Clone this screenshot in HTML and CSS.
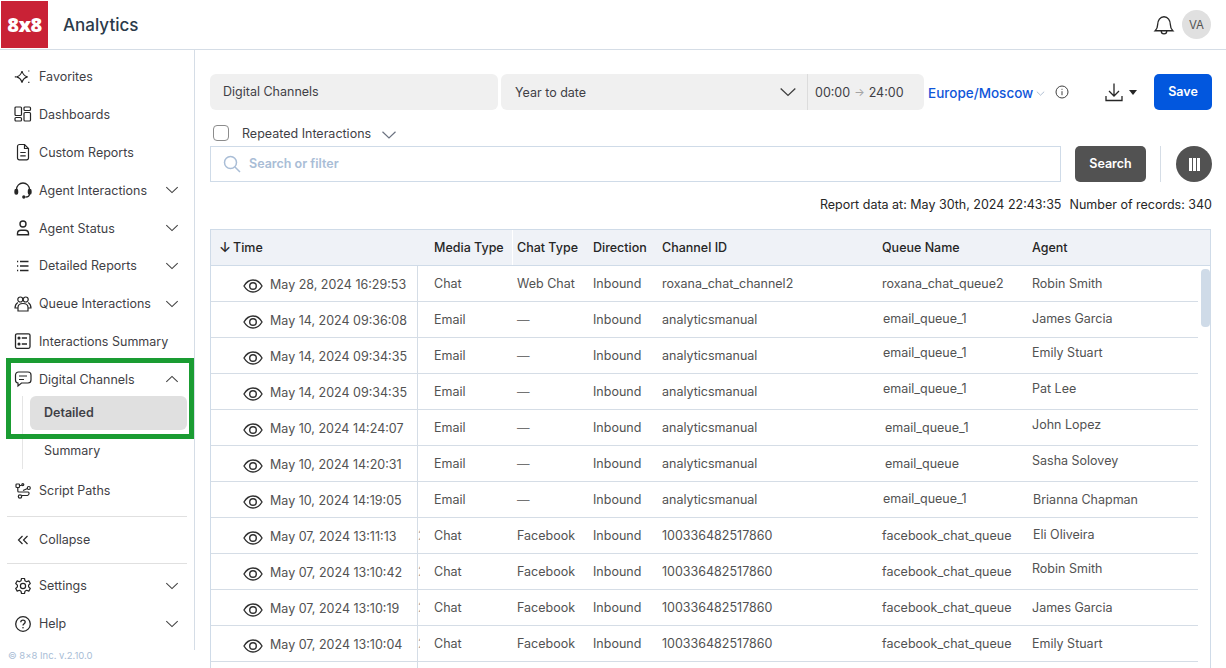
FILE: index.html
```html
<!DOCTYPE html>
<html lang="en">
<head>
    <meta charset="UTF-8">
    <meta name="viewport" content="width=device-width, initial-scale=1.0">
    <title>Analytics</title>
    <link rel="stylesheet" href="styles.css">
</head>
<body>
    <svg class="sprite" aria-hidden="true">
        <symbol id="i-down" viewBox="0 0 16 16"><path d="M1.500 4.800 8 11l6.500-6.200" fill="none" stroke="currentColor" stroke-width="1.200"/></symbol>
        <symbol id="i-eye" viewBox="0 0 20 16"><path d="M1 8c2.200-3.800 5.200-6 9-6s6.800 2.200 9 6c-2.200 3.800-5.200 6-9 6s-6.800-2.200-9-6Z" fill="none" stroke="currentColor" stroke-width="1.400"/><circle cx="10" cy="8" r="3.300" fill="none" stroke="currentColor" stroke-width="1.400"/></symbol>
    </svg>

    <header class="topbar">
        <div class="logo">8x8</div>
        <div class="app-name">Analytics</div>
        <svg class="bell" width="22" height="22" viewBox="0 0 20 20" fill="none" stroke="#262626" stroke-width="1.200"><path d="M2 15.200c1.500-1.400 2.200-2.600 2.200-5.400C4.200 5.800 6.500 2.500 10 2.500s5.800 3.300 5.800 7.300c0 2.800.7 4 2.200 5.400Z"/><path d="M7.500 15.500c0 1.700 1.100 2.600 2.500 2.600s2.500-.9 2.500-2.600"/></svg>
        <div class="avatar">VA</div>
    </header>

    <div class="layout">
        <aside class="sidebar">
            <nav class="nav-list">
                <a class="nav-item">
                    <svg class="nav-icon" viewBox="0 0 18 18" fill="none" stroke="currentColor" stroke-width="1.200"><path d="M8 4c.7 3.300 2.200 5 5.600 5.800C10.200 10.600 8.700 12.300 8 15.600c-.7-3.300-2.200-5-5.600-5.800C5.800 9 7.300 7.300 8 4Z"/><path d="M.8 9.800h1.200M14.800 3.400v1.200M14.800 14.800V16"/></svg>
                    <span>Favorites</span>
                </a>
                <a class="nav-item">
                    <svg class="nav-icon" viewBox="0 0 18 18" fill="none" stroke="currentColor" stroke-width="1.200"><rect x="1" y="2" width="6.500" height="8.500" rx="1"/><rect x="1" y="12.500" width="6.500" height="3.500" rx="1"/><rect x="10" y="2" width="6.500" height="3.500" rx="1"/><rect x="10" y="7.500" width="6.500" height="8.500" rx="1"/></svg>
                    <span>Dashboards</span>
                </a>
                <a class="nav-item">
                    <svg class="nav-icon" viewBox="0 0 18 18" fill="none" stroke="currentColor" stroke-width="1.200"><path d="M5.500 1.500h5l4 4v9.500a1.800 1.800 0 0 1-1.800 1.800H5.300A1.800 1.800 0 0 1 3.500 15V3.500a2 2 0 0 1 2-2Z"/><path d="M10.500 1.500v4h4M6.300 9.500h5.400M6.300 12.800h5.400"/></svg>
                    <span>Custom Reports</span>
                </a>
                <a class="nav-item">
                    <svg class="nav-icon" viewBox="0 0 18 18" fill="none" stroke="currentColor" stroke-width="1.300"><path d="M2.500 10V8.500a6.500 6.500 0 0 1 13 0V10"/><rect x="1" y="8.500" width="2.600" height="4.500" rx="1.200" fill="currentColor"/><rect x="14.400" y="8.500" width="2.600" height="4.500" rx="1.200" fill="currentColor"/><path d="M15.500 13c0 2-1.500 3-4 3"/><circle cx="9.800" cy="16" r="1" fill="currentColor"/></svg>
                    <span>Agent Interactions</span>
                    <svg class="chevron"><use href="#i-down"/></svg>
                </a>
                <a class="nav-item">
                    <svg class="nav-icon" viewBox="0 0 18 18" fill="none" stroke="currentColor" stroke-width="1.400"><circle cx="9" cy="5" r="3"/><path d="M3.500 15.800v-1.300c0-2 1.500-3.300 3.500-3.300h4c2 0 3.500 1.300 3.500 3.300v1.300Z"/></svg>
                    <span>Agent Status</span>
                    <svg class="chevron"><use href="#i-down"/></svg>
                </a>
                <a class="nav-item">
                    <svg class="nav-icon" viewBox="0 0 18 18" fill="none" stroke="currentColor" stroke-width="1.300"><path d="M6 4.500h8.500M6 9h8.500M6 13.500h8.500"/><path d="M3 4.500h1.200M3 9h1.200M3 13.500h1.200"/></svg>
                    <span>Detailed Reports</span>
                    <svg class="chevron"><use href="#i-down"/></svg>
                </a>
                <a class="nav-item">
                    <svg class="nav-icon" viewBox="0 0 18 18" fill="none" stroke="currentColor" stroke-width="1.200"><circle cx="6.300" cy="4.500" r="2.500"/><circle cx="11.700" cy="4.500" r="2.500"/><path d="M4 16v-3.500C4 10 6 8.500 9 8.500s5 1.500 5 4V16Z"/><path d="M3.800 7.500C2.300 8.500 1 10.200 1 13h3M14.200 7.500c1.500 1 2.800 2.700 2.800 5.500h-3"/></svg>
                    <span>Queue Interactions</span>
                    <svg class="chevron"><use href="#i-down"/></svg>
                </a>
                <a class="nav-item">
                    <svg class="nav-icon" viewBox="0 0 18 18" fill="none" stroke="currentColor" stroke-width="1.300"><rect x="1.500" y="1.800" width="14.500" height="14.500" rx="1.500"/><circle cx="5" cy="6" r=".9" fill="currentColor"/><circle cx="5" cy="12" r=".9" fill="currentColor"/><path d="M7.800 6H13M7.800 12H13"/></svg>
                    <span>Interactions Summary</span>
                </a>
                <a class="nav-item">
                    <svg class="nav-icon" viewBox="0 0 18 18" fill="none" stroke="currentColor" stroke-width="1.200"><path d="M4.500 2h9.500A3 3 0 0 1 17 5v5a3 3 0 0 1-3 3H7.500L4 16v-3A3 3 0 0 1 1.500 10V5a3 3 0 0 1 3-3Z"/><path d="M5 6h8M5 9.500h5"/></svg>
                    <span>Digital Channels</span>
                    <svg class="chevron chevron-up"><use href="#i-down"/></svg>
                </a>
                <div class="sub-list">
                    <a class="sub-item sub-item-active">Detailed</a>
                    <a class="sub-item">Summary</a>
                </div>
                <a class="nav-item">
                    <svg class="nav-icon" viewBox="0 0 18 18" fill="none" stroke="currentColor" stroke-width="1.200"><rect x="2" y="2" width="3.500" height="3.500" rx=".8"/><circle cx="8.800" cy="2.600" r="1"/><path d="M5.500 3.500h2.300M3.800 5.500V9a1 1 0 0 0 1 1H14"/><circle cx="14.800" cy="6" r="1.500"/><path d="M13.500 6.500 9 8.500M14 10c1.500 0 1.500 3-.5 3.500H8"/><circle cx="6" cy="14.500" r="1.700"/></svg>
                    <span>Script Paths</span>
                </a>
            </nav>
            <div class="nav-divider"></div>
            <a class="nav-item nav-item-short">
                <svg class="nav-icon" viewBox="0 0 18 18" fill="none" stroke="currentColor" stroke-width="1.200"><path d="M8.500 5 4.500 9l4 4M13.500 5l-4 4 4 4"/></svg>
                <span>Collapse</span>
            </a>
            <div class="nav-divider"></div>
            <a class="nav-item">
                <svg class="nav-icon" viewBox="0 0 18 18" fill="none" stroke="currentColor" stroke-width="1.200"><path d="M7.500 1.500h3l.5 2.300 1.600.9 2.200-.8 1.500 2.600-1.700 1.600v1.800l1.700 1.600-1.500 2.600-2.200-.8-1.600.9-.5 2.300h-3L7 14.200l-1.600-.9-2.200.8-1.500-2.600 1.700-1.600V8.100L1.700 6.500l1.500-2.600 2.200.8L7 3.800Z" stroke-linejoin="round"/><circle cx="9" cy="9" r="2.600"/></svg>
                <span>Settings</span>
                <svg class="chevron"><use href="#i-down"/></svg>
            </a>
            <a class="nav-item">
                <svg class="nav-icon" viewBox="0 0 18 18" fill="none" stroke="currentColor" stroke-width="1.300"><circle cx="9" cy="9" r="7.300"/><path d="M6.800 7.200c0-1.300 1-2.100 2.200-2.100s2.200.8 2.200 2c0 1.700-2.200 1.700-2.200 3.500"/><circle cx="9" cy="12.800" r=".8" fill="currentColor" stroke="none"/></svg>
                <span>Help</span>
                <svg class="chevron"><use href="#i-down"/></svg>
            </a>
            <div class="version">© 8x8 Inc. v.2.10.0</div>
            <div class="highlight-box"></div>
        </aside>

        <main class="content">
            <div class="filter-row">
                <div class="field field-report">Digital Channels</div>
                <div class="field field-period">
                    <span class="period-label">Year to date</span>
                    <svg class="period-chevron"><use href="#i-down"/></svg>
                </div>
                <div class="field field-hours"><span>00:00</span><span class="arrow">→</span><span>24:00</span></div>
                <a class="timezone">Europe/Moscow <svg class="tz-chevron"><use href="#i-down"/></svg></a>
                <svg class="info" width="14" height="14" viewBox="0 0 14 14" fill="none" stroke="#404040" stroke-width="1"><circle cx="7" cy="7" r="6"/><path d="M7 6.200v4M7 3.800v1"/></svg>
                <svg class="download" width="20" height="20" viewBox="0 0 20 20" fill="none" stroke="#262626" stroke-width="1.300"><path d="M10 1.500V14M5 9l5 5 5-5M2 14v4.500h16V14"/></svg>
                <span class="caret"></span>
                <button class="btn-save">Save</button>
            </div>

            <div class="repeat-row">
                <span class="checkbox"></span>
                <span class="repeat-label">Repeated Interactions</span>
                <svg class="repeat-chevron"><use href="#i-down"/></svg>
            </div>

            <div class="search-row">
                <div class="search-input">
                    <svg width="18" height="18" viewBox="0 0 18 18" fill="none" stroke="#a9bdd6" stroke-width="1.500"><circle cx="7.500" cy="7.500" r="6"/><path d="m12 12 5 5"/></svg>
                    <span>Search or filter</span>
                </div>
                <button class="btn-search">Search</button>
                <div class="search-sep"></div>
                <button class="btn-columns"><span></span><span></span><span></span></button>
            </div>

            <div class="report-info">
                <span>Report data at: May 30th, 2024 22:43:35</span>
                <span>Number of records: 340</span>
            </div>

            <section class="table">
                <div class="table-head">
                    <div class="th th-time"><span class="sort-arrow">↓</span> Time</div>
                    <div class="th th-media">Media Type</div>
                    <div class="th">Chat Type</div>
                    <div class="th">Direction</div>
                    <div class="th">Channel ID</div>
                    <div class="th">Queue Name</div>
                    <div class="th">Agent</div>
                </div>
                <div class="table-body">
                    <div class="rows">
                        <div class="row">
                            <div class="td td-time"><svg class="eye"><use href="#i-eye"/></svg>May 28, 2024 16:29:53</div>
                            <div class="td td-media">Chat</div><div class="td">Web Chat</div><div class="td">Inbound</div><div class="td">roxana_chat_channel2</div>
                            <div class="td">roxana_chat_queue2</div><div class="td">Robin Smith</div>
                        </div>
                        <div class="row">
                            <div class="td td-time"><svg class="eye"><use href="#i-eye"/></svg>May 14, 2024 09:36:08</div>
                            <div class="td td-media">Email</div><div class="td td-dash">—</div><div class="td">Inbound</div><div class="td">analyticsmanual</div>
                            <div class="td nudge-up"><span class="nudge-x">email_queue_1</span></div><div class="td nudge-up">James Garcia</div>
                        </div>
                        <div class="row">
                            <div class="td td-time"><svg class="eye"><use href="#i-eye"/></svg>May 14, 2024 09:34:35</div>
                            <div class="td td-media">Email</div><div class="td td-dash">—</div><div class="td">Inbound</div><div class="td">analyticsmanual</div>
                            <div class="td nudge-up-more"><span class="nudge-x">email_queue_1</span></div><div class="td nudge-up-more">Emily Stuart</div>
                        </div>
                        <div class="row">
                            <div class="td td-time"><svg class="eye"><use href="#i-eye"/></svg>May 14, 2024 09:34:35</div>
                            <div class="td td-media">Email</div><div class="td td-dash">—</div><div class="td">Inbound</div><div class="td">analyticsmanual</div>
                            <div class="td nudge-up-more"><span class="nudge-x">email_queue_1</span></div><div class="td nudge-up-more">Pat Lee</div>
                        </div>
                        <div class="row">
                            <div class="td td-time"><svg class="eye"><use href="#i-eye"/></svg>May 10, 2024 14:24:07</div>
                            <div class="td td-media">Email</div><div class="td td-dash">—</div><div class="td">Inbound</div><div class="td">analyticsmanual</div>
                            <div class="td"><span class="nudge-x-more">email_queue_1</span></div><div class="td nudge-up-most">John Lopez</div>
                        </div>
                        <div class="row">
                            <div class="td td-time"><svg class="eye"><use href="#i-eye"/></svg>May 10, 2024 14:20:31</div>
                            <div class="td td-media">Email</div><div class="td td-dash">—</div><div class="td">Inbound</div><div class="td">analyticsmanual</div>
                            <div class="td"><span class="nudge-x-more">email_queue</span></div><div class="td nudge-up-most">Sasha Solovey</div>
                        </div>
                        <div class="row">
                            <div class="td td-time"><svg class="eye"><use href="#i-eye"/></svg>May 10, 2024 14:19:05</div>
                            <div class="td td-media">Email</div><div class="td td-dash">—</div><div class="td">Inbound</div><div class="td">analyticsmanual</div>
                            <div class="td nudge-up"><span class="nudge-x">email_queue_1</span></div><div class="td"><span class="nudge-x">Brianna Chapman</span></div>
                        </div>
                        <div class="row">
                            <div class="td td-time"><svg class="eye"><use href="#i-eye"/></svg>May 07, 2024 13:11:13</div>
                            <div class="td td-media td-clipped">Chat</div><div class="td">Facebook</div><div class="td">Inbound</div><div class="td">100336482517860</div>
                            <div class="td">facebook_chat_queue</div><div class="td nudge-up"><span class="nudge-x">Eli Oliveira</span></div>
                        </div>
                        <div class="row">
                            <div class="td td-time"><svg class="eye"><use href="#i-eye"/></svg>May 07, 2024 13:10:42</div>
                            <div class="td td-media td-clipped">Chat</div><div class="td">Facebook</div><div class="td">Inbound</div><div class="td">100336482517860</div>
                            <div class="td">facebook_chat_queue</div><div class="td nudge-up-more">Robin Smith</div>
                        </div>
                        <div class="row">
                            <div class="td td-time"><svg class="eye"><use href="#i-eye"/></svg>May 07, 2024 13:10:19</div>
                            <div class="td td-media td-clipped">Chat</div><div class="td">Facebook</div><div class="td">Inbound</div><div class="td">100336482517860</div>
                            <div class="td">facebook_chat_queue</div><div class="td">James Garcia</div>
                        </div>
                        <div class="row">
                            <div class="td td-time"><svg class="eye"><use href="#i-eye"/></svg>May 07, 2024 13:10:04</div>
                            <div class="td td-media td-clipped">Chat</div><div class="td">Facebook</div><div class="td">Inbound</div><div class="td">100336482517860</div>
                            <div class="td">facebook_chat_queue</div><div class="td">Emily Stuart</div>
                        </div>
                        <div class="row"><div class="td td-time"></div></div>
                    </div>
                    <div class="scroll-track"><div class="scroll-thumb"></div></div>
                </div>
            </section>
        </main>
    </div>
</body>
</html>
```

FILE: styles.css
```css
* {
    box-sizing: border-box;
}
html, body {
    height: 668px;
    overflow: hidden;
}
body {
    margin: 0;
    font-family: Inter, "Noto Sans", sans-serif;
    font-size: 12.500px;
    color: #3f3f46;
    background: #fff;
}
.sprite {
    display: none;
}

/* top bar */
.topbar {
    height: 50px;
    display: flex;
    align-items: center;
    padding-left: 1px;
    padding-right: 15px;
    border-bottom: 1px solid #d5dde6;
}
.logo {
    width: 47px;
    height: 47px;
    margin-bottom: 1px;
    background: #c92236;
    color: #fff;
    font-family: "Open Sans", sans-serif;
    font-size: 20px;
    font-weight: 800;
    display: flex;
    align-items: center;
    justify-content: center;
    letter-spacing: -0.5px;
}
.app-name {
    margin-left: 15px;
    font-size: 17px;
    font-weight: 500;
    color: #2b3a4a;
}
.bell {
    margin-left: auto;
}
.avatar {
    width: 29px;
    height: 29px;
    margin-left: 7px;
    border-radius: 50%;
    background: #e0e0e0;
    color: #525252;
    font-size: 11.500px;
    display: flex;
    align-items: center;
    justify-content: center;
}

.layout {
    display: flex;
    height: 618px;
}

/* sidebar */
.sidebar {
    position: relative;
    width: 195px;
    flex-shrink: 0;
    padding-top: 7px;
    height: 618px;
}
.sidebar::after {
    content: "";
    position: absolute;
    top: 0;
    right: 0;
    height: 600px;
    border-right: 1px solid #d5dde6;
}
.nav-item {
    height: 38px;
    display: flex;
    align-items: center;
    padding-left: 14px;
    padding-right: 16px;
    gap: 7px;
    color: #3f3f46;
}
.nav-list .nav-item:nth-child(n+6) {
    height: 37.750px;
}
.nav-icon {
    width: 18px;
    height: 18px;
    flex-shrink: 0;
    color: #262626;
}
.chevron {
    width: 14px;
    height: 14px;
    margin-left: auto;
    color: #404040;
}
.chevron-up {
    transform: rotate(180deg);
}
.sub-list {
    margin-left: 22px;
    margin-top: -2px;
    margin-bottom: 3px;
    padding-left: 7px;
    padding-right: 8px;
    border-left: 1px solid #e5e5e5;
    height: 73px;
}
.sub-item {
    display: flex;
    align-items: center;
    height: 34px;
    padding-left: 14px;
    border-radius: 6px;
    color: #3f3f46;
}
.sub-item + .sub-item {
    margin-top: 3px;
}
.sub-item-active {
    background: #e0e0e0;
    font-weight: 600;
    padding-bottom: 2px;
}
.nav-divider {
    height: 1px;
    background: #e0e0e0;
    margin: 7px 8px 3px 7px;
}
.nav-list + .nav-divider {
    margin-top: 6px;
    margin-bottom: 4px;
}
.nav-item-short {
    margin-bottom: -3px;
}
.version {
    margin-left: 8px;
    margin-top: 7px;
    font-size: 9.500px;
    color: #a9bdd6;
}
.highlight-box {
    position: absolute;
    left: 6px;
    top: 308px;
    width: 188px;
    height: 81px;
    border: 5px solid #1a9c32;
}

/* main column */
.content {
    flex: 1;
    min-width: 0;
    padding: 24px 14px 0 15px;
}
.filter-row {
    display: flex;
    align-items: center;
    height: 36px;
}
.field {
    height: 36px;
    background: #f0f0f0;
    display: flex;
    align-items: center;
}
.field-report {
    width: 288px;
    padding-left: 13px;
    padding-bottom: 2px;
    border-radius: 6px;
}
.field-period {
    width: 306px;
    margin-left: 3px;
    padding-left: 14px;
    padding-right: 10px;
    border-radius: 6px 0 0 6px;
    justify-content: space-between;
}
.period-chevron {
    width: 18px;
    height: 18px;
    color: #404040;
}
.field-hours {
    width: 117px;
    padding-left: 7px;
    border-left: 1px solid #dcdcdc;
    border-radius: 0 6px 6px 0;
    gap: 4px;
}
.arrow {
    color: #a3a3a3;
    font-size: 11px;
}
.timezone {
    margin-left: 4px;
    padding-top: 2px;
    color: #0f56d9;
    font-size: 13.500px;
    font-weight: 500;
    display: flex;
    align-items: center;
    gap: 3px;
}
.tz-chevron {
    width: 9px;
    height: 9px;
    color: #8aa0bd;
}
.info {
    margin-left: 10px;
}
.download {
    margin-left: 35px;
}
.caret {
    margin-left: 5px;
    border-left: 4px solid transparent;
    border-right: 4px solid transparent;
    border-top: 5px solid #262626;
}
.btn-save {
    margin-left: auto;
    width: 58px;
    height: 36px;
    border: none;
    border-radius: 5px;
    background: #0257de;
    color: #fff;
    padding: 0 0 2px;
    font: 600 12.500px Inter, sans-serif;
}
.repeat-row {
    display: flex;
    align-items: center;
    height: 36px;
    padding-left: 3px;
    padding-top: 10px;
}
.checkbox {
    width: 16px;
    height: 16px;
    border: 1px solid #8c8c8c;
    border-radius: 4px;
}
.repeat-label {
    margin-left: 13px;
}
.repeat-chevron {
    width: 16px;
    height: 16px;
    margin-left: 10px;
    margin-top: 3px;
    color: #6b7280;
}
.search-row {
    display: flex;
    align-items: center;
    height: 36px;
}
.search-input {
    width: 851px;
    height: 36px;
    border: 1px solid #cfdbe8;
    display: flex;
    align-items: center;
    padding-left: 12px;
    padding-bottom: 1px;
    gap: 8px;
    color: #a9bdd6;
    font-weight: 600;
}
.btn-search {
    margin-left: 14px;
    width: 71px;
    height: 36px;
    border: none;
    border-radius: 5px;
    background: #525252;
    color: #fff;
    padding: 0 0 2px;
    font: 600 12.500px Inter, sans-serif;
}
.search-sep {
    margin-left: 14px;
    width: 1px;
    height: 36px;
    background: #d5dde6;
}
.btn-columns {
    margin-left: 15px;
    width: 36px;
    height: 36px;
    border: none;
    border-radius: 50%;
    background: #525252;
    display: flex;
    align-items: center;
    justify-content: center;
    gap: 1px;
    padding: 0;
}
.btn-columns span {
    width: 3px;
    height: 13px;
    background: #fff;
}
.report-info {
    display: flex;
    justify-content: flex-end;
    gap: 8px;
    height: 47px;
    padding-top: 15px;
    color: #262626;
}

/* table */
.table {
    width: 1001px;
    border: 1px solid #cfdbe8;
    border-bottom: none;
    height: 441px;
    overflow: hidden;
}
.table-head {
    display: grid;
    grid-template-columns: 206px 96px 76px 69px 220px 150px 1fr;
    height: 36px;
    background: #eff2f7;
    border-bottom: 1px solid #cfdbe8;
    color: #262626;
    font-weight: 500;
}
.th {
    display: flex;
    align-items: center;
    padding-left: 4px;
    white-space: nowrap;
}
.th-time {
    padding-left: 8px;
    gap: 2px;
}
.sort-arrow {
    font-size: 14px;
}
.th-media {
    padding-left: 17px;
    border-right: 1px solid #fff;
}
.table-body {
    display: flex;
}
.rows {
    width: 987px;
}
.row {
    display: grid;
    grid-template-columns: 207px 95px 76px 69px 220px 150px 1fr;
    height: 36px;
    border-bottom: 1px solid #d5dde6;
}
.td {
    display: flex;
    align-items: center;
    padding-left: 4px;
    white-space: nowrap;
    color: #525252;
}
.td-time {
    padding-left: 32px;
    padding-top: 1px;
    border-right: 1px solid #d5dde6;
}
.td-media {
    padding-left: 16px;
}
/* sliver of the time text that shows past the column edge */
.td-clipped {
    padding-left: 0;
}
.td-clipped::before {
    content: "2";
    display: block;
    width: 2px;
    margin-right: 14px;
    overflow: hidden;
    color: #a3a3a3;
}
.td-dash {
    color: #737373;
}
.eye {
    width: 20px;
    height: 16px;
    margin-right: 7px;
    margin-top: 3px;
    color: #303030;
}
.nudge-up {
    padding-bottom: 2px;
}
.nudge-up-more {
    padding-bottom: 6px;
}
.nudge-up-most {
    padding-bottom: 7px;
}
.nudge-x {
    margin-left: 1px;
}
.nudge-x-more {
    margin-left: 3px;
}
.scroll-track {
    width: 12px;
    padding-top: 3px;
    padding-left: 3px;
}
.scroll-thumb {
    width: 9px;
    height: 58px;
    border-radius: 4px;
    background: #cfdbe8;
}
```
